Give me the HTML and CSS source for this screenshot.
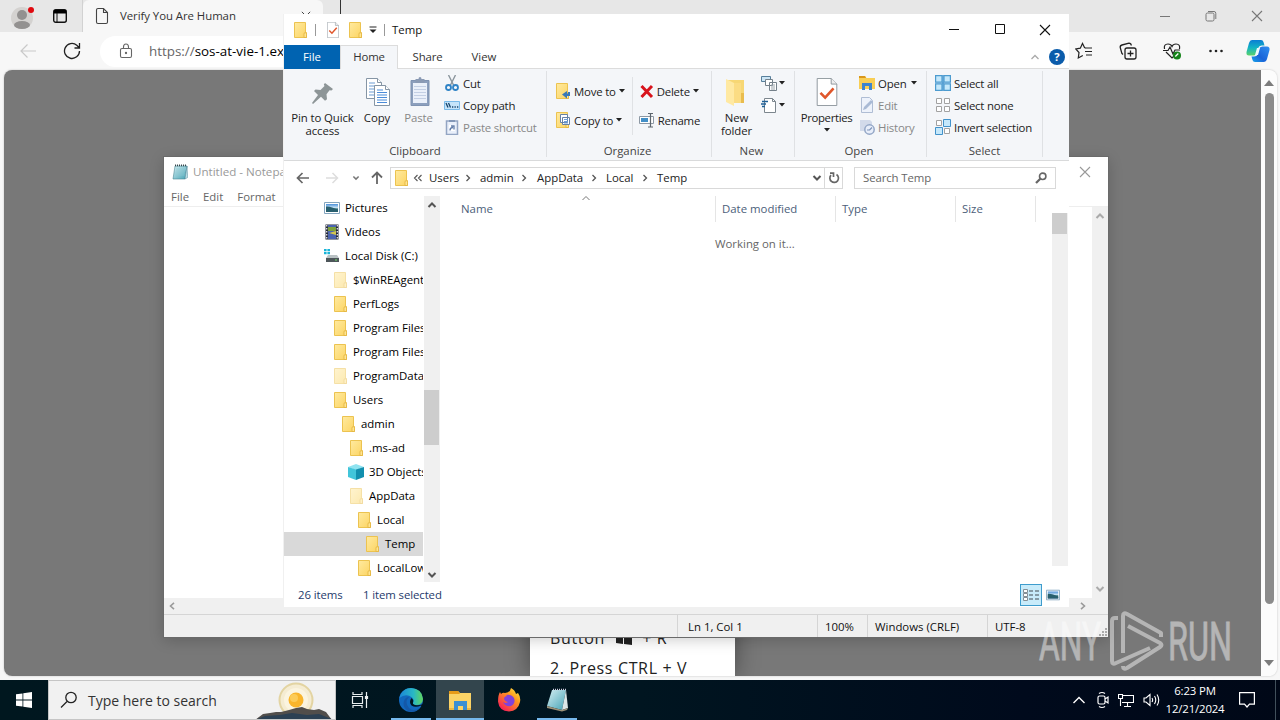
FILE: index.html
```
<!DOCTYPE html>
<html lang="en">
<head>
  <meta charset="UTF-8">
  <meta name="viewport" content="width=device-width, initial-scale=1.0">
  <title>Desktop</title>
  <link rel="stylesheet" href="styles.css">
</head>
<body>
  <!-- shared icons -->
  <svg class="defs" width="0" height="0">
    <defs>
      <linearGradient id="gold" x1="0" y1="0" x2="1" y2="1"><stop offset="0" stop-color="#ffeaa0"/><stop offset="1" stop-color="#fcd462"/></linearGradient>
      <linearGradient id="pad" x1="0" y1="0" x2="1" y2="1"><stop offset="0" stop-color="#d4eef2"/><stop offset="1" stop-color="#45a3b5"/></linearGradient>
      <linearGradient id="sea" x1="0" y1="0" x2="0" y2="1"><stop offset="0" stop-color="#4a8fd8"/><stop offset=".5" stop-color="#d5ecf8"/><stop offset=".6" stop-color="#2d6c74"/><stop offset="1" stop-color="#3b6ea8"/></linearGradient>
    </defs>
    <symbol id="folder" viewBox="0 0 16 16">
      <path d="M2.500.500h11v10h1v5h-12z" fill="url(#gold)" stroke="#ecc350"/>
      <path d="M12 15.500v-3.300q0-1.700 1.200-1.700t1.300 1.700v3.300z" fill="#ffe591" stroke="#e2b23c" stroke-width=".8"/>
    </symbol>
    <symbol id="picture" viewBox="0 0 16 16">
      <path d="M.5 2.500h15v11H.5z" fill="#fff" stroke="#83a5bf"/><path d="M2 4h12v8H2z" fill="url(#sea)"/>
      <path d="M2 6.500q5-.5 12 3.500v2H2z" fill="#285f6e"/>
    </symbol>
    <symbol id="caret" viewBox="0 0 6 4"><path d="M0 0h6L3 3.500z" fill="currentColor"/></symbol>
    <symbol id="up" viewBox="0 0 10 8"><path d="M1.500 6L5 2.500 8.500 6" fill="none" stroke="currentColor" stroke-width="2"/></symbol>
    <symbol id="down" viewBox="0 0 10 8"><path d="M1.500 2L5 5.500 8.500 2" fill="none" stroke="currentColor" stroke-width="2"/></symbol>
    <symbol id="right" viewBox="0 0 6 8"><path d="M1.500 1L4.500 4l-3 3" fill="none" stroke="currentColor" stroke-width="1.300"/></symbol>
    <symbol id="close" viewBox="0 0 12 12"><path d="M1 1l10 10M11 1L1 11" fill="none" stroke="currentColor" stroke-width="1.100"/></symbol>
    <symbol id="check" viewBox="0 0 22 30">
      <path d="M.5.500h15l6 6v23H.5z" fill="#fff" stroke="#8a939a"/><path d="M15.500.500v6h6" fill="#eee" stroke="#8a939a"/>
      <path d="M4 16l5 5 9-10" fill="none" stroke="#e0562b" stroke-width="2.800"/>
    </symbol>
    <symbol id="notepad" viewBox="0 0 16 16">
      <path d="M3 2h12l-2 13H1z" fill="url(#pad)" stroke="#4b8793" stroke-width=".6"/>
      <path d="M15 2l.7 11.500-2.700 1.500z" fill="#b9dfe6" stroke="#56899a" stroke-width=".5"/>
      <path d="M3 1.300h12" stroke="#36474d" stroke-width="1.800" stroke-dasharray="1 1"/>
      <path d="M4 5h9M3.700 7h9M3.400 9h9M3.100 11h9" stroke="#8dc6d0" stroke-width=".6"/>
    </symbol>
  </svg>

  <div class="desktop">
    <!-- Edge -->
    <section class="browser">
      <div class="tabstrip">
        <div class="tab-tools">
          <svg width="24" height="28" viewBox="0 0 24 28"><circle cx="12" cy="16" r="11" fill="#d4d2d0"/><circle cx="12" cy="13" r="5" fill="#939190"/><ellipse cx="12" cy="23" rx="8" ry="4" fill="#939190"/><circle cx="21" cy="8" r="3" fill="#e0090f"/></svg>
          <svg width="16" height="16" viewBox="0 0 16 16"><rect x="1.700" y="1.700" width="12.600" height="12.600" rx="2" fill="none" stroke="#111" stroke-width="1.400"/><path d="M2 2h12v3.500H2z"/><path d="M5 5v9" stroke="#111"/></svg>
        </div>
        <div class="tab">
          <svg width="14" height="18" viewBox="0 0 14 18"><path d="M3 1.500h5.500l4 4V15q0 1.500-1.500 1.500H3Q1.500 16.500 1.500 15V3Q1.500 1.500 3 1.500zM8.500 1.500v4h4" fill="none" stroke="#444" stroke-width="1.100"/></svg>
          <span>Verify You Are Human</span>
          <svg class="tab-close" width="10" height="10"><use href="#close"/></svg>
        </div>
        <div class="new-tab"></div>
        <div class="browser-buttons">
          <svg width="12" height="12"><path d="M1 6.500h10" stroke="#777"/></svg>
          <svg width="12" height="12" viewBox="0 0 12 12" fill="none" stroke="#777"><rect x="1" y="3" width="8" height="8" rx="1.500"/><path d="M3 1.500h6q1.800 0 1.800 1.800V9"/></svg>
          <svg width="12" height="12"><use href="#close"/></svg>
        </div>
      </div>
      <div class="toolbar">
        <svg width="18" height="18" viewBox="0 0 18 18" fill="none" stroke="#c9c9c9" stroke-width="1.200"><path d="M17 9H2M8.500 2.500L2 9l6.500 6.500"/></svg>
        <svg width="18" height="18" viewBox="0 0 18 18" fill="none" stroke="#222" stroke-width="1.300"><path d="M16.500 9a7.500 7.500 0 1 1-2.700-5.800L16 5.500M16.500 1v5h-5"/></svg>
        <div class="address">
          <svg width="14" height="16" viewBox="0 0 14 16" fill="none" stroke="#666" stroke-width="1.100"><rect x="1.500" y="5.500" width="11" height="9" rx="1.500"/><path d="M4.500 5V4a2.500 3 0 0 1 5 0v1"/><circle cx="7" cy="10" r=".6" fill="#555"/></svg>
          <span>https://<b>sos-at-vie-1.ex</b></span>
        </div>
        <div class="toolbar-icons">
          <svg width="18" height="18" viewBox="0 0 18 18" fill="none" stroke="#222" stroke-width="1.200"><path d="M11 6.200L9.500 5.500 7.500 1.500l-2.200 4.700-4.500.7L4 10.500l-.7 5.500 4.500-2.500M11 6h6M10 9.500h7M11 13h6"/></svg>
          <svg width="18" height="18" viewBox="0 0 18 18" fill="none" stroke="#222" stroke-width="1.300"><rect x="6" y="6" width="11" height="11" rx="2"/><path d="M11.500 8.500v6M8.500 11.500h6M4 12.500Q2.500 11.500 2.500 10L1.200 5.500Q1 3.500 3 3l7-1.800q2 0 2.300 2.300"/></svg>
          <svg width="18" height="18" viewBox="0 0 18 18" fill="none" stroke="#222" stroke-width="1.200"><path d="M1.500 7Q.5 2 5 2q3 0 4 2.500Q10 2 13 2q4.500 0 3.500 5M3 10l6 6 2-2M0 8.500h5L7 5l3 7 2-4h5"/><circle cx="14" cy="13.500" r="4" fill="#16841b" stroke="none"/><path d="M12.300 14.500l3-3" stroke="#fff"/></svg>
          <svg width="18" height="18" viewBox="0 0 18 18" fill="#222"><circle cx="3.500" cy="9" r="1.300"/><circle cx="9" cy="9" r="1.300"/><circle cx="14.500" cy="9" r="1.300"/></svg>
          <svg width="24" height="24" viewBox="0 0 24 24">
            <defs>
              <linearGradient id="cpA" x1="0" y1="0" x2="0" y2="1"><stop offset="0" stop-color="#0b7dd4"/><stop offset=".5" stop-color="#12b3c4"/><stop offset="1" stop-color="#5bd36a"/></linearGradient>
              <linearGradient id="cpB" x1="1" y1="0" x2="0" y2="1"><stop offset="0" stop-color="#2f8ff0"/><stop offset=".6" stop-color="#1a63d8"/><stop offset="1" stop-color="#16a5ea"/></linearGradient>
            </defs>
            <path d="M6 1h9q2 0 2.500 2l1 3.500h-3q-2.500 0-3.300 2.500L11 14q-.8 2.500-3.500 2.500H3q-3 0-2.500-3.500L3 4q.8-3 3-3z" fill="url(#cpA)"/>
            <path d="M17.500 23H9q-2 0-2.500-2l-1-3.500H8q3 0 3.800-2.500L13 10q.7-2.500 3.500-2.500H21q3 0 2.500 3.500L21 20q-.8 3-3.500 3z" fill="url(#cpB)"/>
            <path d="M11 9h3l-2 7H9z" fill="#eefaff"/>
          </svg>
        </div>
      </div>
      <div class="viewport">
        <div class="page">
          <div class="card">
            <p>Button&nbsp; <svg width="18" height="16" viewBox="0 0 18 16"><path d="M1 2l7-1v6.500H1zM9 1l8-1v7.500H9zM1 8.500h7V15l-7-1zM9 8.500h8V16l-8-1z" fill="#222"/></svg>&nbsp; + R</p>
            <p class="last">2. Press CTRL + V</p>
          </div>
        </div>
        <div class="page-scroll">
          <svg width="10" height="6"><path d="M0 6l5-6 5 6z" fill="#7c7c7c"/></svg>
          <div class="page-thumb"></div>
          <svg width="10" height="6"><path d="M0 0l5 6 5-6z" fill="#7c7c7c"/></svg>
        </div>
      </div>
    </section>

    <!-- Notepad -->
    <section class="window notepad">
      <div class="notepad-title">
        <svg width="16" height="16"><use href="#notepad"/></svg>
        <span>Untitled - Notepad</span>
        <svg class="push" width="12" height="12"><use href="#close"/></svg>
      </div>
      <div class="notepad-menu"><span>File</span><span>Edit</span><span>Format</span></div>
      <div class="notepad-body">
        <div class="notepad-text"></div>
        <div class="vscroll"><svg width="10" height="8"><use href="#up"/></svg><svg width="10" height="8"><use href="#down"/></svg></div>
      </div>
      <div class="hscroll">
        <svg width="6" height="8" viewBox="0 0 6 8"><path d="M5 .8L1.500 4 5 7.200" fill="none" stroke="#9a9a9a" stroke-width="1.600"/></svg>
        <svg width="6" height="8" viewBox="0 0 6 8"><path d="M1 .8L4.500 4 1 7.200" fill="none" stroke="#9a9a9a" stroke-width="1.600"/></svg>
      </div>
      <div class="notepad-status">
        <span class="st-pos">Ln 1, Col 1</span><span class="st-zoom">100%</span><span class="st-eol">Windows (CRLF)</span><span class="st-enc">UTF-8</span>
        <svg class="grip" width="10" height="10"><path d="M8 1v9M5 4v6M2 7v3" stroke="#aaa" stroke-width="2" stroke-dasharray="2 1"/></svg>
      </div>
    </section>

    <!-- File Explorer -->
    <section class="window explorer">
      <div class="title-bar">
        <svg width="16" height="16"><use href="#folder"/></svg>
        <i class="sep"></i>
        <svg class="quick-check" width="12" height="16"><use href="#check"/></svg>
        <svg width="16" height="16"><use href="#folder"/></svg>
        <svg class="quick-more" width="8" height="8" viewBox="0 0 8 8"><path d="M.5 1h7" stroke="#222"/><path d="M.5 3.500h7L4 7z" fill="#222"/></svg>
        <i class="sep sep-2"></i>
        <span>Temp</span>
        <div class="win-buttons">
          <svg width="12" height="12"><path d="M1 5.500h10" stroke="#111"/></svg>
          <svg width="12" height="12"><path d="M1.500.500h9v9h-9z" fill="none" stroke="#111"/></svg>
          <svg width="12" height="12"><use href="#close"/></svg>
        </div>
      </div>
      <div class="ribbon-tabs">
        <span class="rt file">File</span><span class="rt home">Home</span><span class="rt share">Share</span><span class="rt view">View</span>
        <svg class="collapse" width="10" height="8" viewBox="0 0 10 8"><path d="M1.500 6L5 2.500 8.500 6" fill="none" stroke="#aaa" stroke-width="1.300"/></svg>
        <span class="help">?</span>
      </div>
      <div class="ribbon">
        <div class="group g-clipboard">
          <div class="group-body">
            <div class="big pin">
              <svg width="32" height="32" viewBox="0 0 32 32"><path d="M18 7l8 6-1.500 1.500-2-.3-3 4 .5 5-2 1.500-4-4L6 28l-1-1 6-8-4-4 1.500-1.500 5 .5 4-4-.7-1.500z" fill="#8d9597"/></svg>
              <span>Pin to Quick<br>access</span>
            </div>
            <div class="big copy">
              <svg width="32" height="32" viewBox="0 0 32 32"><g fill="#fff" stroke="#8595a5"><path d="M5.500 2.500h11l4 4v16h-15z"/><path d="M16.500 2.500v4h4" /></g><path d="M8 7h6M8 10h10M8 13h10M8 16h10M8 19h10" stroke="#6b9bd3"/><g fill="#fff" stroke="#8595a5"><path d="M13.500 9.500h11l4 4v16h-15z"/><path d="M24.500 9.500v4h4"/></g><path d="M16 14h6M16 16.500h10M16 19h10M16 21.500h10M16 24h10M16 26.500h10" stroke="#4b8bd8"/></svg>
              <span>Copy</span>
            </div>
            <div class="big paste off">
              <svg width="32" height="32" viewBox="0 0 32 32"><path d="M8 4.500h18v25H8z" fill="#8c9fbd" stroke="#7f93b2"/><path d="M10 7h14v20H10z" fill="#eaf0fa"/><path d="M12.500 3h3q0-2 1.500-2t1.500 2h3v4h-9z" fill="#8a9ab4"/><path d="M11 10.500h12M11 13.500h12M11 16.500h12M11 19.500h12M11 22.500h12" stroke="#c3cfe4"/></svg>
              <span>Paste</span>
            </div>
            <div class="stack">
              <div class="cmd"><svg width="16" height="16" viewBox="0 0 16 16"><path d="M4.500 0l5 10M11.500 0l-5 10" stroke="#8b969e" stroke-width="1.400"/><g fill="none" stroke="#2f83c6" stroke-width="1.800"><circle cx="4.500" cy="12.500" r="2.500"/><circle cx="11.500" cy="12.500" r="2.500"/></g></svg>Cut</div>
              <div class="cmd"><svg width="16" height="16" viewBox="0 0 16 16"><path d="M.5 4.500h15v8H.5z" fill="#c5e4fa" stroke="#79b9e8"/><path d="M2 6l2 4.500M4.500 6l2 4.500" stroke="#17436b" stroke-width="1.300"/><path d="M8 10h1.300M10.500 10h1.300M13 10h1.300" stroke="#17436b" stroke-width="1.300"/></svg>Copy path</div>
              <div class="cmd off"><svg width="16" height="16" viewBox="0 0 16 16"><path d="M2.500 2h11v13.500h-11z" fill="#e9effa" stroke="#93a5c3" stroke-width="1.500"/><path d="M5 1h6v2H5z" fill="#8397b7"/><path d="M5 6h6v6H5z" fill="#fff"/><path d="M6 11.500q0-3 3-3M7 7h3v3.500" fill="none" stroke="#657fab" stroke-width="1.400"/></svg>Paste shortcut</div>
            </div>
          </div>
          <div class="group-name">Clipboard</div>
        </div>
        <div class="group g-organize">
          <div class="group-body">
            <div class="stack two">
              <div class="cmd"><svg width="16" height="16" viewBox="0 0 16 16"><use href="#folder" width="16" height="16" x="-2"/><path d="M14 9v4h-3v2.500L6 11.500 11 8v2.500h1V9z" fill="#3a78b8"/></svg>Move to<svg class="dd" width="6" height="4"><use href="#caret"/></svg></div>
              <div class="cmd"><svg width="16" height="16" viewBox="0 0 16 16"><use href="#folder" width="16" height="16" x="-2"/><path d="M4.500 2.500h7v8h-7zM6.500 5.500h7v7h-7z" fill="#fff" stroke="#6781a5"/><path d="M8 7.500h4M8 9.500h4M8 11h4" stroke="#6d9dd6"/></svg>Copy to<svg class="dd" width="6" height="4"><use href="#caret"/></svg></div>
            </div>
            <i class="inner-line"></i>
            <div class="stack two second">
              <div class="cmd"><svg width="16" height="16" viewBox="0 0 16 16"><path d="M2.500 3l10.500 11M13 3L2.500 14" stroke="#d8131c" stroke-width="3"/></svg>Delete<svg class="dd" width="6" height="4"><use href="#caret"/></svg></div>
              <div class="cmd"><svg width="16" height="16" viewBox="0 0 16 16"><path d="M.5 4.500h14v7H.5z" fill="#fff" stroke="#8d98a4"/><path d="M2 6h7v4H2z" fill="#438fc7"/><path d="M9 1.500h5M9 15h5M11.500 1.500V15" stroke="#5c656d" stroke-width="1.200"/></svg>Rename</div>
            </div>
          </div>
          <div class="group-name">Organize</div>
        </div>
        <div class="group g-new">
          <div class="group-body">
            <div class="big new-folder">
              <svg width="32" height="32" viewBox="0 0 32 32"><path d="M7 4h16v23H7z" fill="#f7d774"/><path d="M5 3l8 4v23l-8-4z" fill="#ffe9a2"/><path d="M13 7h7v20h-7z" fill="#fbdc83"/><path d="M20 17h3v10h-3z" fill="#e9bc4e"/></svg>
              <span>New<br>folder</span>
            </div>
            <div class="stack icons">
              <div class="cmd"><svg width="16" height="16" viewBox="0 0 16 16"><path d="M.5 1.500h9v5h-9z" fill="#cce5f5" stroke="#577f9b"/><path d="M4.500 4.500h7v6h-7zM8.500 7.500h7v8h-7z" fill="#fff" stroke="#74808a"/><path d="M10 10h4M10 12h4M10 14h4" stroke="#9aa4ac"/></svg><svg class="dd" width="6" height="4"><use href="#caret"/></svg></div>
              <div class="cmd"><svg width="16" height="16" viewBox="0 0 16 16"><path d="M3.500 1.500h8l3 3v11h-11z" fill="#fff" stroke="#7c868e"/><path d="M11.500 1.500v3h3" fill="none" stroke="#7c868e"/><path d="M1 4.500h6M0 7h5M1 9.500h3" stroke="#1f6096" stroke-width="1.300"/></svg><svg class="dd" width="6" height="4"><use href="#caret"/></svg></div>
            </div>
          </div>
          <div class="group-name">New</div>
        </div>
        <div class="group g-open">
          <div class="group-body">
            <div class="big props">
              <svg width="32" height="32" viewBox="-5 -2 32 32"><use href="#check" width="22" height="28"/></svg>
              <span>Properties</span>
              <svg class="dd" width="6" height="4"><use href="#caret"/></svg>
            </div>
            <div class="stack">
              <div class="cmd"><svg width="16" height="16" viewBox="0 0 16 16"><path d="M0 1h6l1.500 2H16v11H0z" fill="#f8ce55"/><path d="M0 1h6l1 2H0z" fill="#d9971c"/><path d="M3 15V8h10v7h-3v-4H6v4z" fill="#3b83cf"/></svg>Open<svg class="dd" width="6" height="4"><use href="#caret"/></svg></div>
              <div class="cmd off"><svg width="16" height="16" viewBox="0 0 16 16"><path d="M2.500.500h8l3 3v12h-11z" fill="#edf2fb" stroke="#afbdd4"/><path d="M4 13l1-3 7-7 2 2-7 7z" fill="#a9bad5"/></svg>Edit</div>
              <div class="cmd off"><svg width="16" height="16" viewBox="0 0 16 16"><path d="M1 1h10l2 2v9H1z" fill="#d2daea"/><circle cx="10.500" cy="10.500" r="4.700" fill="#e8eefa" stroke="#93a6c6" stroke-width="1.500"/><path d="M10.500 11l2.500-2.500M10.500 11H8" stroke="#8095ba" stroke-width="1.200"/></svg>History</div>
            </div>
          </div>
          <div class="group-name">Open</div>
        </div>
        <div class="group g-select">
          <div class="group-body">
            <div class="stack">
              <div class="cmd"><svg width="16" height="16" viewBox="0 0 16 16" fill="#c5e8fb" stroke="#4c9bcf" stroke-width="1.200"><path d="M.6.600h6.400v6.400H.6zM9 .6h6.400v6.400H9zM.6 9h6.400v6.400H.6zM9 9h6.400v6.400H9z"/><path d="M8 0v16M0 8h16" stroke="#3d92cd"/></svg>Select all</div>
              <div class="cmd"><svg width="16" height="16" viewBox="0 0 16 16" fill="#fff" stroke="#a2a2a2"><path d="M1.500 1.500h5v5h-5zM9.500 1.500h5v5h-5zM1.500 9.500h5v5h-5zM9.500 9.500h5v5h-5z"/></svg>Select none</div>
              <div class="cmd"><svg width="16" height="16" viewBox="0 0 16 16" fill="#c5e8fb" stroke="#4292ca"><path d="M1.500 1.500h5v5h-5zM9.500 9.500h5v5h-5z" fill="#fff" stroke="#a2a2a2"/><path d="M8.500.500h7v7h-7zM.5 8.500h7v7h-7z"/></svg>Invert selection</div>
            </div>
          </div>
          <div class="group-name">Select</div>
        </div>
      </div>
      <div class="nav-bar">
        <svg width="14" height="12" viewBox="0 0 14 12" fill="none" stroke="#666" stroke-width="1.700"><path d="M13 6H2M6.500 1L1.500 6l5 5"/></svg>
        <svg class="fwd" width="14" height="12" viewBox="0 0 14 12" fill="none" stroke="#ddd" stroke-width="1.500"><path d="M1 6h11M7.500 1l5 5-5 5"/></svg>
        <svg class="recent" width="8" height="6"><use href="#down" color="#777"/></svg>
        <svg class="parent" width="12" height="14" viewBox="0 0 12 14" fill="none" stroke="#666" stroke-width="1.800"><path d="M6 13V2M1 6.500l5-5 5 5"/></svg>
        <div class="path">
          <svg width="16" height="16"><use href="#folder"/></svg>
          <svg class="dbl" width="10" height="8" viewBox="0 0 10 8"><path d="M4.500 1L1.500 4l3 3M8.500 1l-3 3 3 3" fill="none" stroke="#555" stroke-width="1.100"/></svg>
          <span class="c1">Users</span><svg width="6" height="8"><use href="#right"/></svg>
          <span class="c2">admin</span><svg width="6" height="8"><use href="#right"/></svg>
          <span class="c3">AppData</span><svg width="6" height="8"><use href="#right"/></svg>
          <span class="c4">Local</span><svg width="6" height="8"><use href="#right"/></svg>
          <span class="c5">Temp</span>
          <svg class="push" width="10" height="8"><use href="#down"/></svg>
          <div class="refresh"><svg width="12" height="12" viewBox="0 0 12 12" fill="none" stroke="#666" stroke-width="1.700"><path d="M8.500 2.500A4.300 4.300 0 1 1 3 3.200M2 1.200h3.500V5"/></svg></div>
        </div>
        <div class="search">Search Temp
          <svg width="12" height="12" viewBox="0 0 12 12" fill="none" stroke="#666"><circle cx="7.700" cy="4.300" r="3.200" stroke-width="1.600"/><path d="M5.300 6.700L1 11" stroke-width="2.200"/></svg>
        </div>
      </div>
      <div class="explorer-body">
        <ul class="tree">
          <li class="l0"><svg width="16" height="16"><use href="#picture"/></svg><span>Pictures</span></li>
          <li class="l0"><svg width="16" height="16" viewBox="0 0 16 16"><path d="M1.500.500h13v15h-13z" fill="#23283a"/><path d="M4 1h8v14H4z" fill="#4a63b0"/><path d="M4 3h8v4H4z" fill="#7da13b"/><path d="M5 9l7-2v4z" fill="#d5c64c"/><path d="M2.700 1v15M13.300 1v15" stroke="#e6e6e6" stroke-width="1.300" stroke-dasharray="1.500 1.500"/></svg><span>Videos</span></li>
          <li class="l0"><svg width="16" height="16" viewBox="0 0 16 16"><path d="M0 1h2.600v2.300H0zM3.400 1H6v2.300H3.400zM0 4h2.600v2.300H0zM3.400 4H6v2.300H3.400z" fill="#18b4d8"/><path d="M4 7h9l2 3H2z" fill="#b9c1c4"/><path d="M2 10h13v4H2z" fill="#4d565a"/><path d="M11 12h2" stroke="#72e26a"/></svg><span>Local Disk (C:)</span></li>
          <li class="l1 hidden-item"><svg width="16" height="16"><use href="#folder"/></svg><span>$WinREAgent</span></li>
          <li class="l1"><svg width="16" height="16"><use href="#folder"/></svg><span>PerfLogs</span></li>
          <li class="l1"><svg width="16" height="16"><use href="#folder"/></svg><span>Program Files</span></li>
          <li class="l1"><svg width="16" height="16"><use href="#folder"/></svg><span>Program Files</span></li>
          <li class="l1 hidden-item"><svg width="16" height="16"><use href="#folder"/></svg><span>ProgramData</span></li>
          <li class="l1"><svg width="16" height="16"><use href="#folder"/></svg><span>Users</span></li>
          <li class="l2"><svg width="16" height="16"><use href="#folder"/></svg><span>admin</span></li>
          <li class="l3"><svg width="16" height="16"><use href="#folder"/></svg><span>.ms-ad</span></li>
          <li class="l3"><svg width="16" height="16" viewBox="0 0 16 16"><path d="M0 3l8-3 8 3-8 3z" fill="#8fe3f0"/><path d="M0 3l8 2.500V16l-8-3z" fill="#41c5da"/><path d="M16 3L8 5.500V16l8-3z" fill="#128fae"/></svg><span>3D Objects</span></li>
          <li class="l3 hidden-item"><svg width="16" height="16"><use href="#folder"/></svg><span>AppData</span></li>
          <li class="l4"><svg width="16" height="16"><use href="#folder"/></svg><span>Local</span></li>
          <li class="l5 selected"><svg width="16" height="16"><use href="#folder"/></svg><span>Temp</span></li>
          <li class="l4"><svg width="16" height="16"><use href="#folder"/></svg><span>LocalLow</span></li>
        </ul>
        <div class="tree-scroll"><svg width="10" height="8"><use href="#up"/></svg><div class="tree-thumb"></div><svg width="10" height="8"><use href="#down"/></svg></div>
        <div class="files">
          <div class="columns">
            <span class="col-name">Name<svg class="sort" width="10" height="8" viewBox="0 0 10 8"><path d="M1.500 6L5 2.500 8.500 6" fill="none" stroke="#777"/></svg></span>
            <span class="col-date">Date modified</span><span class="col-type">Type</span><span class="col-size">Size</span>
          </div>
          <p class="working">Working on it...</p>
        </div>
        <div class="files-scroll"><div class="files-thumb"></div></div>
      </div>
      <div class="status">
        <span class="count">26 items</span><span>1 item selected</span>
        <div class="views">
          <div class="details"><svg width="16" height="12" viewBox="0 0 16 12"><path d="M.5.500h4v3h-4zM.5 4.500h4v3h-4zM.5 8.500h4v3h-4z" fill="#fff" stroke="#858f96"/><path d="M6 2h4M12 2h4M6 6h4M12 6h4M6 10h4M12 10h4" stroke="#454d52"/></svg></div>
          <svg width="14" height="14"><use href="#picture"/></svg>
        </div>
      </div>
    </section>

    <!-- watermark over everything -->
    <svg class="watermark" width="196" height="64" viewBox="0 0 196 64">
      <g fill="#fff" stroke="#fff" stroke-width=".8" font-family="Roboto, sans-serif" font-size="53">
        <text x="1" y="51" textLength="62" lengthAdjust="spacingAndGlyphs">ANY</text>
        <text x="130" y="51" textLength="64" lengthAdjust="spacingAndGlyphs">RUN</text>
      </g>
      <g fill="none" stroke="#fff" stroke-width="4" stroke-linejoin="round">
        <path d="M80 9h-3q-3 0-3 3v40q0 4 4 2l34-15"/>
        <path d="M85 44V7q0-4 4-2l34 19v4"/>
        <path d="M90 17l32 17q3 2 0 4L89 59q-4 2-4-2"/>
      </g>
    </svg>

    <!-- taskbar -->
    <footer class="taskbar">
      <div class="start"><svg width="16" height="16" viewBox="0 0 16 16" fill="#fff"><path d="M0 2.300L6.500 1.400v6.200H0zM7.300 1.300L16 0v7.600H7.300zM0 8.400h6.500v6.200L0 13.700zM7.300 8.400H16V16l-8.700-1.300z"/></svg></div>
      <div class="task-search">
        <svg width="18" height="18" viewBox="0 0 18 18" fill="none" stroke="#222" stroke-width="1.300"><circle cx="11" cy="6.500" r="5.200"/><path d="M7 10.500L1 16.500"/></svg>
        <span>Type here to search</span>
        <svg class="sun" width="80" height="38" viewBox="0 0 80 38">
          <circle cx="41" cy="19" r="16.500" fill="#f5ecd2" stroke="#e3d4a2" stroke-width="2"/><circle cx="41" cy="19" r="12" fill="#fbf4df"/><circle cx="41" cy="19" r="7.500" fill="#f9b52c"/><circle cx="39" cy="17" r="4" fill="#fccb58"/>
          <path d="M0 39l8-6 7-1 6-1 5 0 8-2 7-2 6-1 5 2 7 1 5-1 7 3 6 8z" fill="#514e4b"/>
          <path d="M0 39l10-4 15-1 12-2 15 2 12-1 15 6z" fill="#2b4053"/>
        </svg>
      </div>
      <div class="apps">
        <div class="app"><svg width="18" height="16" viewBox="0 0 18 16" fill="none" stroke="#e8eef0" stroke-width="1.200"><path d="M2 0v2.500h9V0M2 16v-2.500h9V16M1.500 4.500h10v7h-10zM15.500 0v16"/><path d="M14.500 4.500h2v2h-2z" fill="#fff"/></svg></div>
        <div class="app open"><svg width="24" height="24" viewBox="0 0 24 24">
          <defs><linearGradient id="edgeA" x1="0" x2="1"><stop offset="0" stop-color="#1b86d8"/><stop offset=".6" stop-color="#29b8c5"/><stop offset="1" stop-color="#63d75b"/></linearGradient></defs>
          <circle cx="12" cy="12" r="12" fill="#1268be"/>
          <path d="M.3 10C2 3 7 0 12 0q11 .5 12 11-.5 6-7 6-4 0-3-2.500 1.500-2.500-1-5Q7 5 .3 10z" fill="url(#edgeA)"/>
          <path d="M10 9q-5 5 0 11 4 4 11 0-5 5-11 3.500Q3 20 5 13q1.500-4 5-4z" fill="#1458a8"/>
          <path d="M12.500 10q-3 4 0 7.500 4 2.500 9.500 0l1.500 1.500 .5-3q-4 2-8 1-3-1-1.800-3 .8-2-1.700-4z" fill="#01151f"/>
        </svg></div>
        <div class="app open active"><svg width="24" height="22" viewBox="0 0 24 22"><path d="M1 2h9l2 2h11v17H1z" fill="#fbd366"/><path d="M1 2h9l2 3H1z" fill="#e79b18"/><path d="M6 21v-9h13v9h-4v-4h-5v4z" fill="#3b8fd2"/><path d="M1 19h5v2H1zM19 19h4v2h-4z" fill="#efb73f"/></svg></div>
        <div class="app"><svg width="24" height="24" viewBox="0 0 24 24">
          <defs><linearGradient id="fox" x1="1" y1="0" x2=".2" y2="1"><stop offset="0" stop-color="#fff04a"/><stop offset=".4" stop-color="#ff9a1e"/><stop offset="1" stop-color="#f5175b"/></linearGradient></defs>
          <path d="M3 4l1 2q2-2 4-1Q13 5 14 0q4 2 5 6l2-1q3 4 2 9-2 9-11 9.500Q2 23 1 13.500 1 7 3 4z" fill="url(#fox)"/>
          <path d="M9 7q5-1 8 3 2 5-3 8-6 1-8-4 3 2 5 0-4-1-4-4 1-2 3-2z" fill="#8142da"/>
        </svg></div>
        <div class="app open"><svg width="24" height="24" viewBox="0 0 24 24"><path d="M7 2h14l-4 20-15-4z" fill="url(#pad)"/><path d="M21 2l2 18-6 2z" fill="#dbe6e6"/><path d="M2 18l15 4 6-2-1 2-5 1.500L2 20z" fill="#9d9278"/><path d="M8 1.500h13" stroke="#ccd" stroke-width="1.500" stroke-dasharray="1 1"/></svg></div>
      </div>
      <div class="tray">
        <svg width="14" height="10" viewBox="0 0 14 10" fill="none" stroke="#fff" stroke-width="1.400"><path d="M1.500 8L7 2.500 12.500 8"/></svg>
        <svg width="14" height="18" viewBox="0 0 14 18" fill="none" stroke="#fff" stroke-width="1.200"><rect x="3" y="5" width="7" height="8" rx="1.500"/><path d="M10 8l3-2v6l-3-2M4 2.500q3-2 6 0M4 15.500q3 2 6 0"/></svg>
        <svg width="16" height="16" viewBox="0 0 16 16" fill="none" stroke="#fff" stroke-width="1.100"><path d="M5 3.500h10.500v7H4M.5 2.500h4v4h-4zM2.500 6.500v7.500M9.500 10.500v4M6 14.500h7"/></svg>
        <svg width="17" height="14" viewBox="0 0 17 14" fill="none" stroke="#fff" stroke-width="1.100"><path d="M1 5h2l4-3.500v11L3 9H1zM9 5q1.300 2 0 4M11.500 3q2.500 4 0 8M14 1.500q3.500 5.500 0 11"/></svg>
        <div class="clock">6:23 PM<br>12/21/2024</div>
        <svg width="16" height="16" viewBox="0 0 16 16" fill="none" stroke="#fff" stroke-width="1.200"><path d="M.6.600h14.800v11.500H10.500L8 15l-2.500-2.900H.6z"/></svg>
      </div>
    </footer>
  </div>
</body>
</html>
```
FILE: styles.css
```
* {
  box-sizing: border-box;
  margin: 0;
  padding: 0;
}
body {
  width: 1280px;
  height: 720px;
  overflow: hidden;
  font-family: "Open Sans", "Noto Sans", sans-serif;
  font-size: 11.4px;
  color: #111;
}
svg {
  flex: none;
  display: block;
}
.defs { position: absolute; }
.desktop {
  position: relative;
  width: 1280px;
  height: 720px;
  display: flex;
  flex-direction: column;
  white-space: nowrap;
}

/* browser */
.browser {
  height: 680px;
  display: flex;
  flex-direction: column;
  background: #f7f7f7;
}
.tabstrip {
  height: 32px;
  display: flex;
  background: #e7e7e7;
}
.tab-tools {
  width: 83px;
  display: flex;
  align-items: center;
  padding-left: 10px;
  gap: 18px;
  border-right: 1px solid #d2d2d2;
}
.tab {
  width: 240px;
  display: flex;
  align-items: center;
  padding-left: 12px;
  gap: 11px;
  background: #f7f7f7;
  border-radius: 6px 6px 0 0;
  color: #333;
}
.tab span {
  letter-spacing: -0.05px;
  padding-bottom: 2px;
}
.tab-close { margin-left: 54px; }
.new-tab {
  width: 18px;
  border-right: 1px solid #333;
  height: 20px;
}
.browser-buttons {
  margin-left: auto;
  display: flex;
  align-items: center;
  gap: 34px;
  padding-right: 17px;
  color: #777;
}
.toolbar {
  height: 38px;
  display: flex;
  align-items: center;
  padding-left: 19px;
  gap: 26px;
}
.toolbar > svg:nth-child(2) { margin-right: -7px; }
.address {
  width: 900px;
  height: 31px;
  display: flex;
  align-items: center;
  padding-left: 19px;
  gap: 16px;
  border-radius: 16px;
  background: #fff;
  font-size: 13.4px;
  color: #666;
}
.address b {
  font-weight: normal;
  color: #000;
}
.toolbar-icons {
  margin-left: auto;
  display: flex;
  align-items: center;
  gap: 26px;
  padding-right: 10px;
}
.toolbar-icons svg:last-child { margin-left: -5px; }
.viewport {
  flex: 1;
  display: flex;
  margin: 0 3px 4px 4px;
  min-height: 0;
  border-radius: 8px;
  overflow: hidden;
  box-shadow: 0 0 2px #bbb;
}
.page {
  flex: 1;
  display: flex;
  justify-content: center;
  background: #787878;
}
.card {
  width: 205px;
  display: flex;
  flex-direction: column;
  justify-content: flex-end;
  padding-left: 20px;
  background: #fff;
  box-shadow: 0 0 22px rgba(0, 0, 0, 0.4);
  font-size: 16px;
  letter-spacing: 0.65px;
  color: #222;
}
.card p { line-height: 24px; }
.card p svg { display: inline-block; vertical-align: -1px; }
.card .last { line-height: 16px; margin: 10px 0 0; }
.page-scroll {
  width: 16px;
  display: flex;
  flex-direction: column;
  align-items: center;
  padding: 10px 0;
  background: #fcfcfc;
}
.page-thumb {
  width: 9px;
  height: 511px;
  margin: 7px 0 auto;
  border-radius: 5px;
  background: #8b8b8b;
}

/* windows */
.window {
  position: absolute;
  display: flex;
  flex-direction: column;
  background: #fff;
}
.push { margin-left: auto; }
.notepad {
  left: 164px;
  top: 157px;
  width: 944px;
  height: 480px;
  box-shadow: 0 0 0 1px #6a6a6a, 0 3px 14px rgba(0, 0, 0, 0.2);
}
.notepad-title {
  height: 29px;
  display: flex;
  align-items: center;
  gap: 5px;
  padding: 0 17px 0 8px;
  color: #999;
  font-size: 11.6px;
}
.notepad-menu {
  height: 21px;
  display: flex;
  align-items: center;
  gap: 14px;
  padding-left: 7px;
  color: #666;
  border-bottom: 1px solid #eee;
}
.notepad-body { flex: 1; display: flex; }
.notepad-text { flex: 1; }
.vscroll {
  width: 16px;
  display: flex;
  flex-direction: column;
  align-items: center;
  justify-content: space-between;
  padding: 5px 0;
  background: #f0f0f0;
  color: #aaa;
}
.hscroll {
  height: 16px;
  display: flex;
  align-items: center;
  justify-content: space-between;
  padding: 0 22px 0 5px;
  background: #f0f0f0;
}
.notepad-status {
  height: 23px;
  display: flex;
  padding-left: 513px;
  border-top: 1px solid #d5d5d5;
  background: #f0f0f0;
  line-height: 23px;
}
.notepad-status span {
  border-left: 1px solid #d5d5d5;
  padding-left: 7px;
}
.notepad-status .st-pos { width: 140px; padding-left: 10px; }
.st-zoom { width: 50px; }
.st-eol { width: 120px; }
.grip { margin: 12px 0 0 auto; }

/* file explorer */
.explorer {
  left: 283px;
  top: 14px;
  width: 786px;
  height: 593px;
  border-left: 1px solid #f0f0f0;
}
.title-bar {
  height: 31px;
  display: flex;
  align-items: center;
  padding-left: 8px;
}
.sep {
  width: 1px;
  height: 12px;
  margin: 0 11px 0 7px;
  background: #999;
}
.quick-check { margin-right: 8px; }
.quick-more { margin-left: 6px; }
.sep-2 { margin: 0 7px; }
.win-buttons {
  margin-left: auto;
  display: flex;
  gap: 33px;
  padding-right: 18px;
}
.win-buttons svg:first-child { margin-right: 1px; }
.ribbon-tabs {
  height: 24px;
  display: flex;
  align-items: center;
  border-bottom: 1px solid #dcdcdc;
}
.rt {
  height: 24px;
  line-height: 24px;
  text-align: center;
  color: #333;
}
.file {
  width: 56px;
  background: #0063b1;
  color: #fff;
}
.home {
  width: 58px;
  background: #f4f6f9;
  border: 1px solid #dcdcdc;
  border-bottom: 0;
  line-height: 22px;
  letter-spacing: -0.15px;
}
.share { width: 59px; letter-spacing: -0.15px; }
.view { width: 54px; }
.collapse { margin-left: auto; }
.help {
  width: 16px;
  height: 16px;
  margin: 0 4px 0 9px;
  border-radius: 50%;
  background: #0b5cab;
  color: #fff;
  font-weight: bold;
  line-height: 16px;
  text-align: center;
}
.ribbon {
  height: 92px;
  display: flex;
  background: #f4f6f9;
  border-bottom: 1px solid #d9dadb;
  color: #222;
}
.group {
  display: flex;
  flex-direction: column;
  margin: 2px 0 3px;
  border-right: 1px solid #dfe1e4;
}
.group-body {
  flex: none;
  height: 71px;
  display: flex;
}
.group-name {
  text-align: center;
  line-height: 18px;
  color: #444;
}
.g-clipboard { width: 263px; }
.g-organize { width: 165px; }
.g-new { width: 83px; }
.g-open { width: 132px; }
.g-select { width: 116px; }
.g-organize .group-name, .g-new .group-name, .g-open .group-name { padding-right: 3px; }
.big {
  display: flex;
  flex-direction: column;
  align-items: center;
  padding-top: 5px;
  line-height: 13px;
  text-align: center;
  letter-spacing: -0.1px;
}
.big span { margin-top: 3px; }
.big .dd { margin: 4px 0 0; }
.pin { width: 77px; }
.copy { width: 32px; }
.paste { width: 51px; }
.new-folder { width: 49px; }
.props { width: 63px; letter-spacing: -0.35px; }
.off { color: #888; }
.stack {
  display: flex;
  flex-direction: column;
}
.cmd {
  height: 22px;
  display: flex;
  align-items: center;
  gap: 3px;
  padding-top: 2px;
  letter-spacing: -0.2px;
}
.dd { margin-left: 1px; }
.icons .dd { margin-left: -1px; }
.g-open .cmd .dd { margin-left: 2px; }
.stack.two {
  padding: 8px 0 0 9px;
  gap: 7px;
}
.stack.two .cmd { gap: 2px; }
.stack.two.second { padding-left: 6px; }
.stack.two.second .cmd:last-child { gap: 3px; }
.g-select .stack { padding-left: 8px; }
.g-open .cmd { margin-left: 1px; }
.inner-line {
  width: 1px;
  height: 58px;
  margin: 6px 0 0 7px;
  background: #e0e2e5;
}
.nav-bar {
  height: 35px;
  display: flex;
  align-items: center;
  padding: 0 13px 2px 12px;
}
.fwd { margin-left: 15px; }
.recent { margin-left: 13px; }
.parent { margin-left: 11px; }
.path {
  width: 453px;
  height: 22px;
  display: flex;
  align-items: center;
  margin: 0 11px 0 7px;
  padding-left: 2px;
  border: 1px solid #d9d9d9;
  color: #555;
}
.path span { color: #222; }
.path .dbl { margin: 0 6px 0 4px; }
.c1 { width: 36px; }
.c2 { width: 41px; margin-left: 9px; }
.c3 { width: 54px; margin-left: 10px; }
.c4 { width: 36px; margin-left: 9px; }
.c5 { margin-left: 9px; }
.refresh {
  width: 18px;
  height: 20px;
  display: flex;
  align-items: center;
  justify-content: center;
  margin-left: 2px;
  border-left: 1px solid #d9d9d9;
}
.search {
  width: 202px;
  height: 22px;
  display: flex;
  align-items: center;
  justify-content: space-between;
  padding: 0 8px 0 8px;
  border: 1px solid #d9d9d9;
  color: #666;
  letter-spacing: -0.1px;
}
.explorer-body {
  flex: 1;
  min-height: 0;
  display: flex;
}
.tree {
  width: 139px;
  overflow: hidden;
  list-style: none;
}
.tree li {
  height: 24px;
  display: flex;
  align-items: center;
  gap: 5px;
  color: #000;
}
.tree span { padding-bottom: 2px; }
.l0 { padding-left: 40px; }
.l1 { padding-left: 48px; }
.l2 { padding-left: 56px; }
.l3 { padding-left: 64px; }
.l4 { padding-left: 72px; }
.l5 { padding-left: 80px; }
.hidden-item svg { opacity: 0.5; }
.selected { background: #d9d9d9; }
.tree-scroll {
  width: 16px;
  display: flex;
  flex-direction: column;
  align-items: center;
  margin-left: 1px;
  padding: 5px 0 3px;
  background: #f0f0f0;
  color: #555;
}
.tree-thumb {
  width: 15px;
  height: 55px;
  margin: 181px 1px auto 0;
  background: #cdcdcd;
}
.files { flex: 1; }
.columns {
  height: 26px;
  display: flex;
  line-height: 26px;
  color: #4c607a;
}
.columns span { border-right: 1px solid #e5e5e5; }
.col-name {
  width: 276px;
  display: flex;
  padding-left: 21px;
}
.sort { margin: -2px 0 0 88px; }
.col-date { width: 120px; padding-left: 6px; }
.col-type { width: 120px; padding-left: 6px; }
.col-size { width: 80px; padding-left: 6px; }
.working {
  padding: 14px 0 0 275px;
  color: #666;
}
.files-scroll {
  width: 16px;
  margin: 17px 1px 16px 0;
  background: #f0f0f0;
}
.files-thumb {
  width: 15px;
  height: 21px;
  background: #cdcdcd;
}
.status {
  height: 25px;
  display: flex;
  align-items: center;
  padding-left: 14px;
  color: #1e3a6b;
  letter-spacing: -0.1px;
}
.count { width: 65px; }
.views {
  margin-left: auto;
  display: flex;
  align-items: center;
  gap: 4px;
  padding-right: 9px;
}
.details {
  width: 22px;
  height: 22px;
  display: flex;
  align-items: center;
  justify-content: center;
  border: 1px solid #3e9ccd;
  background: #c8ebfa;
}
.watermark {
  position: absolute;
  left: 1038px;
  top: 609px;
  opacity: 0.45;
}

/* taskbar */
.taskbar {
  height: 40px;
  display: flex;
  background: linear-gradient(90deg, #00171f 0, #001520 50%, #000a1c 80%, #000817 100%);
}
.start {
  width: 48px;
  display: flex;
  align-items: center;
  justify-content: center;
}
.task-search {
  width: 288px;
  display: flex;
  align-items: center;
  padding-left: 11px;
  gap: 10px;
  border: 1px solid #c5c5c5;
  background: #f1f1f1;
  font-size: 14px;
  color: #333;
}
.sun {
  margin-left: auto;
  align-self: flex-end;
}
.apps {
  display: flex;
  gap: 1px;
}
.app {
  width: 48px;
  height: 40px;
  display: flex;
  align-items: center;
  justify-content: center;
}
.app:first-child { width: 50px; padding-right: 2px; }
.app:last-child { margin-left: -1px; }
.open { background: linear-gradient(#76b9ed, #76b9ed) center bottom / 40px 2px no-repeat; }
.open.active {
  background-size: 48px 2px;
  background-color: #33454d;
}
.tray {
  margin-left: auto;
  display: flex;
  align-items: center;
  gap: 9px;
  margin-right: 4px;
  padding-right: 20px;
  border-right: 1px solid #41505b;
}
.clock {
  width: 62px;
  margin: 0 4px 0 -5px;
  text-align: center;
  line-height: 18px;
  letter-spacing: -0.15px;
  color: #fff;
}
```
